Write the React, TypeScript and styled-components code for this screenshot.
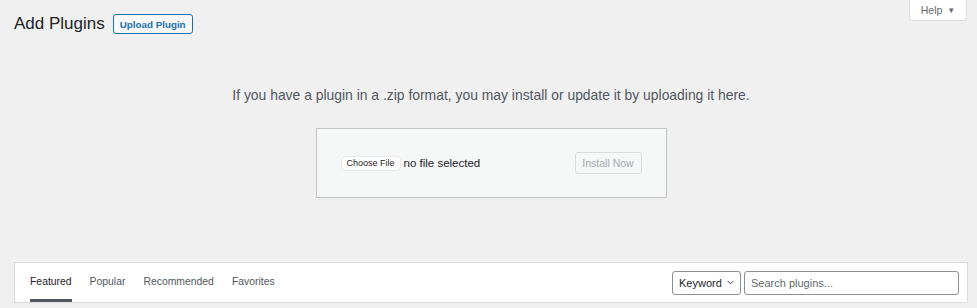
import React from "react";
import styled, { createGlobalStyle } from "styled-components";

const GlobalStyle = createGlobalStyle`
    html, body {
        margin: 0;
        padding: 0;
        background: #f0f0f1;
        font-family: "Liberation Sans", Arial, sans-serif;
        color: #3c434a;
    }
    * { box-sizing: border-box; }
`;

const tabs = ["Featured", "Popular", "Recommended", "Favorites"];

const App = () => {
    return (
        <Page>
            <GlobalStyle />
            <Header>
                <TitleRow>
                    <Title>Add Plugins</Title>
                    <UploadButton>Upload Plugin</UploadButton>
                </TitleRow>
                <HelpTab>
                    Help <Caret>▼</Caret>
                </HelpTab>
            </Header>

            <UploadSection>
                <InstallHelp>
                    If you have a plugin in a .zip format, you may install or update it by uploading it here.
                </InstallHelp>
                <UploadForm>
                    <FileField>
                        <ChooseButton>Choose File</ChooseButton>
                        <FileName>no file selected</FileName>
                    </FileField>
                    <InstallButton disabled>Install Now</InstallButton>
                </UploadForm>
            </UploadSection>

            <FilterBar>
                <Tabs>
                    {tabs.map((t, i) => (
                        <Tab key={t} $current={i === 0}>{t}</Tab>
                    ))}
                </Tabs>
                <SearchForm>
                    <Select>
                        Keyword
                        <svg width="9" height="9" viewBox="0 0 10 10" fill="none">
                            <path d="M2 3.5 L5 6.5 L8 3.5" stroke="#3c434a" strokeWidth="1.1" strokeLinecap="round" strokeLinejoin="round" />
                        </svg>
                    </Select>
                    <SearchInput placeholder="Search plugins..." />
                </SearchForm>
            </FilterBar>
        </Page>
    );
};

export default App;

const Page = styled.div`
    padding: 0 9px 0 14px;
    width: 977px;
    min-height: 308px;
`;

const Header = styled.div`
    display: flex;
    justify-content: space-between;
    align-items: flex-start;
`;

const TitleRow = styled.div`
    display: flex;
    align-items: center;
    gap: 8px;
    padding-top: 14px;
    height: 34px;
`;

const Title = styled.h1`
    margin: 0;
    font-size: 17px;
    font-weight: 400;
    color: #1d2327;
    line-height: 20px;
`;

const UploadButton = styled.button`
    height: 20px;
    padding: 0 6px;
    border: 1px solid #2271b1;
    border-radius: 3px;
    background: #f6f7f7;
    color: #2271b1;
    font-family: inherit;
    font-size: 9.8px;
    font-weight: 700;
`;

const HelpTab = styled.button`
    margin-right: 1px;
    width: 58px;
    height: 21px;
    border: 1px solid #dcdcde;
    border-top: none;
    border-radius: 0 0 4px 4px;
    background: #fff;
    color: #646970;
    font-family: inherit;
    font-size: 10.5px;
    display: flex;
    align-items: center;
    justify-content: center;
    gap: 5px;
    padding: 0;
`;

const Caret = styled.span`
    font-size: 8px;
`;

const UploadSection = styled.div`
    display: flex;
    flex-direction: column;
    align-items: center;
`;

const InstallHelp = styled.p`
    margin: 51px 0 0;
    font-size: 13.9px;
    line-height: 20px;
    color: #50575e;
    text-align: center;
`;

const UploadForm = styled.div`
    margin-top: 23px;
    width: 351px;
    height: 70px;
    padding: 0 24px 0 25px;
    background: #f6f7f7;
    border: 1px solid #c3c4c7;
    display: flex;
    align-items: center;
    justify-content: space-between;
`;

const FileField = styled.div`
    display: flex;
    align-items: center;
    gap: 4px;
`;

const ChooseButton = styled.button`
    height: 13px;
    padding: 0 5px;
    border: none;
    border-radius: 3px;
    background: #fff;
    box-shadow: 0 0 0 0.5px #dcdcde;
    color: #1d2327;
    font-family: inherit;
    font-size: 9px;
`;

const FileName = styled.span`
    font-size: 11.5px;
    color: #1d2327;
`;

const InstallButton = styled.button`
    width: 67px;
    height: 22px;
    padding: 0;
    border: 1px solid #dcdcde;
    border-radius: 3px;
    background: #f6f7f7;
    color: #a7aaad;
    font-family: inherit;
    font-size: 10.5px;
`;

const FilterBar = styled.div`
    margin-top: 64px;
    height: 41px;
    background: #fff;
    border: 1px solid #dcdcde;
    display: flex;
    justify-content: space-between;
    align-items: stretch;
    padding: 0 8px 0 15px;
`;

const Tabs = styled.div`
    display: flex;
    gap: 18px;
`;

const Tab = styled.a<{ $current?: boolean }>`
    display: flex;
    align-items: center;
    font-size: 10.4px;
    color: ${p => (p.$current ? "#1d2327" : "#50575e")};
    border-bottom: 3px solid ${p => (p.$current ? "#50575e" : "transparent")};
    cursor: pointer;
`;

const SearchForm = styled.div`
    display: flex;
    align-items: center;
    gap: 3px;
`;

const Select = styled.div`
    width: 69px;
    height: 24px;
    border: 1px solid #8c8f94;
    border-radius: 3px;
    display: flex;
    align-items: center;
    gap: 4px;
    padding-left: 6px;
    font-size: 11px;
    color: #1d2327;
`;

const SearchInput = styled.input`
    width: 215px;
    height: 24px;
    border: 1px solid #8c8f94;
    border-radius: 3px;
    padding: 0 6px;
    font-family: inherit;
    font-size: 11px;
    color: #1d2327;
    outline: none;
    &::placeholder { color: #646970; }
`;
